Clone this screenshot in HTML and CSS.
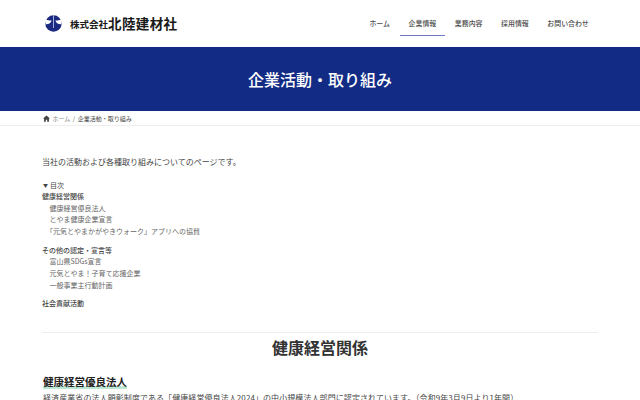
FILE: index.html
```html
<!DOCTYPE html>
<html lang="ja">
<head>
    <meta charset="utf-8">
    <title>企業活動・取り組み | 株式会社北陸建材社</title>
    <link rel="stylesheet" href="styles.css">
</head>
<body>
    <header class="site-header">
        <a class="logo" href="#">
            <svg class="logo-mark" width="17" height="17" viewBox="0 0 17 17">
                <circle cx="8.5" cy="8.5" r="8.2" fill="#1b2a80"></circle>
                <path d="M0 3.6C2 5.6 4 5.8 6.6 5.4 6 7.8 4 9.4.6 9.2z" fill="#fff"></path>
                <path d="M17 3.6C15 5.6 13 5.8 10.4 5.4 11 7.8 13 9.4 16.4 9.2z" fill="#fff"></path>
                <path d="M8.5 0V13" stroke="#9fb0e0" stroke-width="1" fill="none"></path>
            </svg>
            <span class="logo-small">株式会社</span><span class="logo-big">北陸建材社</span>
        </a>
        <nav class="global-nav">
            <a href="#">ホーム</a>
            <a href="#" class="current">企業情報</a>
            <a href="#">業務内容</a>
            <a href="#">採用情報</a>
            <a href="#">お問い合わせ</a>
        </nav>
    </header>

    <div class="page-title">
        <h1>企業活動・取り組み</h1>
    </div>

    <div class="breadcrumb">
        <svg width="7" height="7" viewBox="0 0 12 12">
            <path d="M6 .8 0 6h1.8v5.4h3V8h2.4v3.4h3V6H12z" fill="#444"></path>
        </svg>
        <a href="#">ホーム</a>
        <span>/</span>
        <span class="here">企業活動・取り組み</span>
    </div>

    <main class="content">
        <p class="lead">当社の活動および各種取り組みについてのページです。</p>

        <div class="toc">
            <div class="toc-title"><span class="toc-arrow">▼</span>目次</div>
            <div class="toc-group">
                <a class="toc-head" href="#">健康経営関係</a>
                <a href="#">健康経営優良法人</a>
                <a href="#">とやま健康企業宣言</a>
                <a href="#">「元気とやまかがやきウォーク」アプリへの協賛</a>
            </div>
            <div class="toc-group">
                <a class="toc-head" href="#">その他の認定・宣言等</a>
                <a href="#">富山県SDGs宣言</a>
                <a href="#">元気とやま！子育て応援企業</a>
                <a href="#">一般事業主行動計画</a>
            </div>
            <div class="toc-group">
                <a class="toc-head" href="#">社会貢献活動</a>
            </div>
        </div>

        <h2>健康経営関係</h2>
        <h3><span class="marker">健康経営優良法人</span></h3>
        <p class="body-text">経済産業省の法人顕彰制度である「健康経営優良法人2024」の中小規模法人部門に認定されています。（令和9年3月9日より1年間）</p>
    </main>
</body>
</html>
```

FILE: styles.css
```css
:root {
    --navy: #122b85;
    --text-color: #333333;
    --sub-color: #666666;
    --border-color: #eeeeee;
}
* {
    box-sizing: border-box;
}
html, body {
    height: 400px;
    overflow: hidden;
}
body {
    margin: 0;
    background-color: #ffffff;
    color: var(--text-color);
    font-family: "Noto Sans CJK JP", "Noto Sans", sans-serif;
    font-size: 8px;
    line-height: 1.5;
}
a {
    color: inherit;
    text-decoration: none;
}
.site-header {
    display: flex;
    justify-content: space-between;
    height: 47px;
    padding: 0 42.5px 0 45px;
}
.logo {
    display: flex;
    align-items: center;
    height: 47px;
    padding-bottom: 1px;
    color: #1a1a1a;
    font-weight: 700;
}
.logo-mark {
    margin-right: 8px;
}
.logo-small {
    font-size: 9.5px;
    margin-top: 2px;
}
.logo-big {
    font-size: 13.5px;
    letter-spacing: 0.4px;
}
.global-nav {
    display: flex;
    padding-top: 11px;
    height: 36px;
    font-size: 6.9px;
    font-weight: 500;
}
.global-nav a {
    display: block;
    height: 25px;
    padding: 6px 8.8px 0;
    margin-left: 1.1px;
    line-height: 13px;
    color: #4a4a4a;
}
.global-nav a.current {
    border-bottom: 1px solid #6f78c4;
}
.page-title {
    display: flex;
    align-items: center;
    justify-content: center;
    height: 64px;
    background-color: var(--navy);
}
.page-title h1 {
    margin: 0;
    color: #ffffff;
    font-size: 16px;
    font-weight: 500;
    line-height: 1.5;
}
.breadcrumb {
    display: flex;
    align-items: center;
    gap: 2.5px;
    height: 15px;
    padding: 1px 0 0 43px;
    border-bottom: 1px solid var(--border-color);
    color: var(--sub-color);
    font-size: 6px;
}
.breadcrumb a {
    color: #888888;
}
.breadcrumb .here {
    color: #444444;
}
.content {
    padding: 0 42px;
}
.lead {
    margin: 0;
    padding-top: 29px;
    font-size: 8px;
    line-height: 13px;
    color: #444444;
}
.toc {
    margin-top: 11px;
    padding-bottom: 16px;
    border-bottom: 1px solid var(--border-color);
    font-size: 7px;
    line-height: 11.7px;
    color: #666666;
}
.toc-title {
    height: 12px;
    line-height: 11px;
    color: #444444;
}
.toc-arrow {
    display: inline-block;
    width: 8px;
    padding-left: 1px;
    font-size: 5px;
    vertical-align: 1px;
}
.toc-group {
    margin-bottom: 6.7px;
}
.toc-group a {
    display: block;
    padding-left: 7.5px;
    text-spacing-trim: trim-start;
}
.toc-group a.toc-head {
    padding-left: 0;
    font-weight: 500;
    color: #444444;
}
.content h2 {
    margin: 0;
    padding-top: 2px;
    color: #333333;
    font-size: 16px;
    font-weight: 700;
    line-height: 24px;
    text-align: center;
}
.content h3 {
    margin: 15px 0 0;
    padding-left: 1px;
    font-size: 10.5px;
    font-weight: 700;
    line-height: 15px;
    color: #222222;
}
.marker {
    display: inline-block;
    height: 14px;
    line-height: 13px;
    background: linear-gradient(transparent 76%, #bde8d4 76%);
}
.body-text {
    margin: 3px 0 0;
    padding-left: 1px;
    font-size: 8px;
    letter-spacing: 0.08px;
    line-height: 12px;
    white-space: nowrap;
    color: #444444;
}
```
